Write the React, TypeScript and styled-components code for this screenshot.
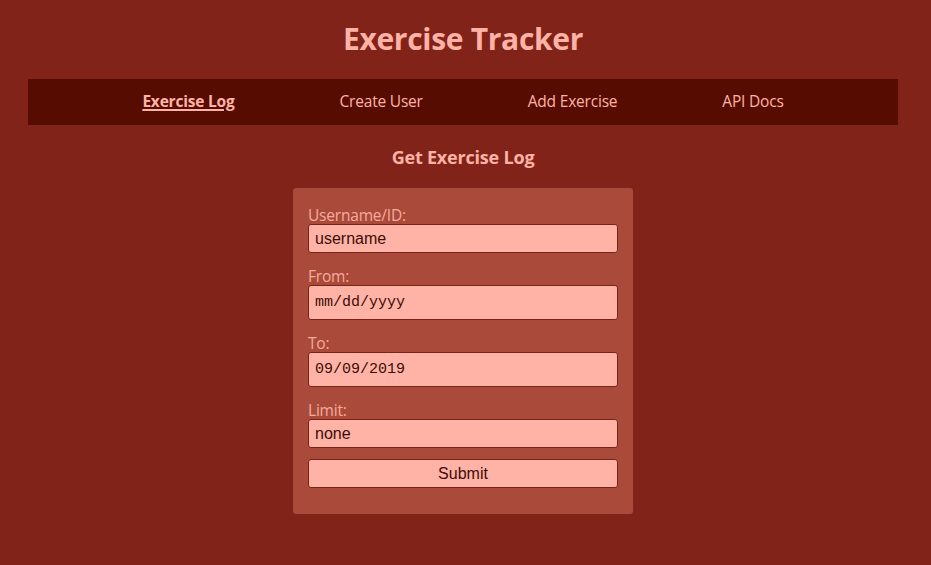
import React from "react";
import styled, { createGlobalStyle } from "styled-components";

const Global = createGlobalStyle`
  html, body { margin: 0; padding: 0; }
  body {
    background: #82231a;
    font-family: "Open Sans", "Noto Sans", sans-serif;
    color: #ffb3a7;
  }
`;

const Page = styled.div`
  display: flex;
  flex-direction: column;
  align-items: stretch;
  padding: 0 33px 0 28px;
`;

const Title = styled.h1`
  margin: 19px 0 21px;
  text-align: center;
  font-size: 30px;
  line-height: 39px;
  font-weight: 700;
  color: #ffb3a7;
  letter-spacing: -0.3px;
`;

const Nav = styled.nav`
  box-sizing: border-box;
  height: 46px;
  padding-bottom: 3px;
  background: #570c01;
  display: flex;
  justify-content: center;
  align-items: center;
  gap: 105px;
`;

const NavLink = styled.a<{ $active?: boolean }>`
  font-size: 15.5px;
  color: #ffb3a7;
  font-weight: ${(p) => (p.$active ? 700 : 400)};
  text-decoration: ${(p) => (p.$active ? "underline" : "none")};
  text-decoration-thickness: 2px;
  text-underline-offset: 2px;
  cursor: pointer;
  letter-spacing: -0.2px;
`;

const Heading = styled.h2`
  margin: 20px 0 18px;
  text-align: center;
  font-size: 18px;
  line-height: 25px;
  font-weight: 700;
  color: #ffb3a7;
  letter-spacing: -0.2px;
`;

const Card = styled.form`
  align-self: center;
  width: 340px;
  box-sizing: border-box;
  background: #a94a3b;
  border-radius: 3px;
  padding: 18px 15px 26px;
  display: flex;
  flex-direction: column;
`;

const Field = styled.div`
  display: flex;
  flex-direction: column;
  margin-bottom: 14px;
`;

const Label = styled.label`
  font-size: 15.5px;
  line-height: 18px;
  color: #f7aa9c;
  letter-spacing: -0.2px;
`;

const Input = styled.input<{ $mono?: boolean }>`
  box-sizing: border-box;
  width: 100%;
  height: ${(p) => (p.$mono ? "35px" : "29px")};
  margin: 0;
  background: #ffb3a7;
  border: 1px solid #7c2115;
  border-radius: 3px;
  padding: 0 6px;
  font-family: ${(p) =>
    p.$mono ? '"Liberation Mono", "DejaVu Sans Mono", monospace' : '"Liberation Sans", Arial, sans-serif'};
  font-size: ${(p) => (p.$mono ? "15px" : "16px")};
  color: #3d0c06;
  outline: none;
`;

const Submit = styled.button`
  box-sizing: border-box;
  width: 100%;
  height: 29px;
  margin-top: -3px;
  background: #ffb3a7;
  border: 1px solid #7c2115;
  border-radius: 3px;
  font-family: "Liberation Sans", Arial, sans-serif;
  font-size: 16px;
  color: #3d0c06;
  padding: 0;
`;

export default function App() {
  return (
    <>
      <Global />
      <Page>
        <Title>Exercise Tracker</Title>
        <Nav>
          <NavLink $active>Exercise Log</NavLink>
          <NavLink>Create User</NavLink>
          <NavLink>Add Exercise</NavLink>
          <NavLink>API Docs</NavLink>
        </Nav>
        <Heading>Get Exercise Log</Heading>
        <Card onSubmit={(e) => e.preventDefault()}>
          <Field>
            <Label>Username/ID:</Label>
            <Input defaultValue="username" />
          </Field>
          <Field>
            <Label>From:</Label>
            <Input $mono defaultValue="mm/dd/yyyy" />
          </Field>
          <Field>
            <Label>To:</Label>
            <Input $mono defaultValue="09/09/2019" />
          </Field>
          <Field>
            <Label>Limit:</Label>
            <Input defaultValue="none" />
          </Field>
          <Submit type="submit">Submit</Submit>
        </Card>
      </Page>
    </>
  );
}
